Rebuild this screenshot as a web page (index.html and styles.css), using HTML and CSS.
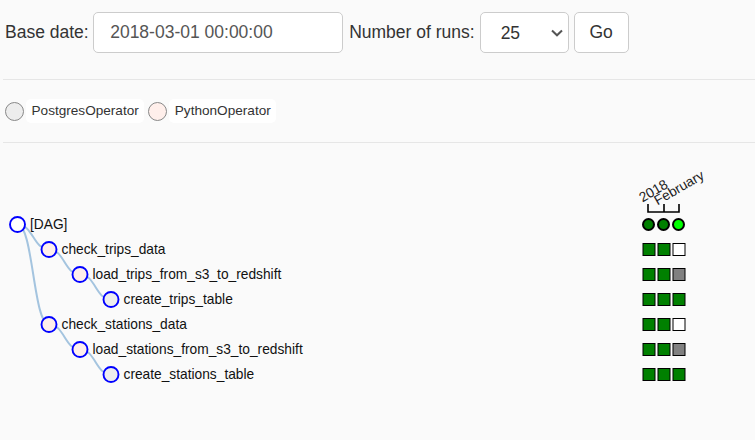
FILE: index.html
```html
<!DOCTYPE html>
<html lang="en">
<head>
<meta charset="utf-8">
<title>Tree view</title>
<link rel="stylesheet" href="styles.css">
</head>
<body>
<div class="page">
  <form class="toolbar">
    <label class="lbl base">Base date:</label>
    <input class="ctl date" type="text" value="2018-03-01 00:00:00">
    <label class="lbl runs">Number of runs:</label>
    <div class="select-wrap">
      <select class="ctl sel"><option>25</option></select>
      <svg class="chev" width="12" height="8" viewBox="0 0 12 8"><polyline points="1,1.5 6,6.3 11,1.5"/></svg>
    </div>
    <button class="ctl btn" type="button">Go</button>
  </form>
  <hr class="rule rule-top">
  <div class="legend">
    <span class="swatch postgres"></span><span class="tag">PostgresOperator</span>
    <span class="swatch python"></span><span class="tag">PythonOperator</span>
  </div>
  <hr class="rule rule-mid">
  <svg class="tree" width="755" height="297" viewBox="0 143 755 297">
    <g class="links">
      <path d="M17.5,224.5C33.25,224.5 33.25,249.5 49,249.5"/>
      <path d="M17.5,224.5C33.25,224.5 33.25,324.5 49,324.5"/>
      <path d="M49,249.5C64.5,249.5 64.5,274.5 80,274.5"/>
      <path d="M80,274.5C95.5,274.5 95.5,299.5 111,299.5"/>
      <path d="M49,324.5C64.5,324.5 64.5,349.5 80,349.5"/>
      <path d="M80,349.5C95.5,349.5 95.5,374.5 111,374.5"/>
    </g>
    <g class="nodes">
      <circle class="n-dag" cx="17.5" cy="224.5" r="7.5"/>
      <text x="30" y="224.5" dy="0.35em">[DAG]</text>
      <circle class="n-py" cx="49" cy="249.5" r="7.5"/>
      <text x="61.5" y="249.5" dy="0.35em">check_trips_data</text>
      <circle class="n-py" cx="80" cy="274.5" r="7.5"/>
      <text x="92.5" y="274.5" dy="0.35em">load_trips_from_s3_to_redshift</text>
      <circle class="n-pg" cx="111" cy="299.5" r="7.5"/>
      <text x="123.5" y="299.5" dy="0.35em">create_trips_table</text>
      <circle class="n-py" cx="49" cy="324.5" r="7.5"/>
      <text x="61.5" y="324.5" dy="0.35em">check_stations_data</text>
      <circle class="n-py" cx="80" cy="349.5" r="7.5"/>
      <text x="92.5" y="349.5" dy="0.35em">load_stations_from_s3_to_redshift</text>
      <circle class="n-pg" cx="111" cy="374.5" r="7.5"/>
      <text x="123.5" y="374.5" dy="0.35em">create_stations_table</text>
    </g>
    <g class="axis">
      <path d="M648,204V212H679V204M664,212V204"/>
      <text transform="translate(642.5,202.5) rotate(-30)">2018</text>
      <text transform="translate(657.5,205.5) rotate(-30)">February</text>
    </g>
    <g class="runs-row">
      <circle class="run ok" cx="648.5" cy="224.5" r="5.5"/>
      <circle class="run ok" cx="663.5" cy="224.5" r="5.5"/>
      <circle class="run live" cx="678.5" cy="224.5" r="5.5"/>
    </g>
    <g class="squares">
      <rect class="s-ok" x="643" y="243.5" width="12" height="12"/>
      <rect class="s-ok" x="658" y="243.5" width="12" height="12"/>
      <rect class="s-none" x="673" y="243.5" width="12" height="12"/>

      <rect class="s-ok" x="643" y="268.5" width="12" height="12"/>
      <rect class="s-ok" x="658" y="268.5" width="12" height="12"/>
      <rect class="s-gray" x="673" y="268.5" width="12" height="12"/>

      <rect class="s-ok" x="643" y="293.5" width="12" height="12"/>
      <rect class="s-ok" x="658" y="293.5" width="12" height="12"/>
      <rect class="s-ok" x="673" y="293.5" width="12" height="12"/>

      <rect class="s-ok" x="643" y="318.5" width="12" height="12"/>
      <rect class="s-ok" x="658" y="318.5" width="12" height="12"/>
      <rect class="s-none" x="673" y="318.5" width="12" height="12"/>

      <rect class="s-ok" x="643" y="343.5" width="12" height="12"/>
      <rect class="s-ok" x="658" y="343.5" width="12" height="12"/>
      <rect class="s-gray" x="673" y="343.5" width="12" height="12"/>

      <rect class="s-ok" x="643" y="368.5" width="12" height="12"/>
      <rect class="s-ok" x="658" y="368.5" width="12" height="12"/>
      <rect class="s-ok" x="673" y="368.5" width="12" height="12"/>
    </g>
  </svg>
</div>
</body>
</html>
```
FILE: styles.css
```css
html, body {
  margin: 0;
  padding: 0;
  background: #fafafa;
  overflow: hidden;
}
body {
  font-family: "Liberation Sans", Arial, sans-serif;
  color: #333;
}
.page {
  width: 755px;
  height: 440px;
}
.toolbar {
  display: flex;
  align-items: center;
  height: 41px;
  margin: 0;
  padding: 12px 0 0 5px;
}
.lbl {
  font-size: 17.5px;
  color: #333;
  white-space: nowrap;
}
.base {
  margin-right: 4.5px;
}
.runs {
  margin-left: 6px;
  margin-right: 5px;
}
.ctl {
  box-sizing: border-box;
  height: 41px;
  margin: 0;
  background: #fff;
  border: 1px solid #ccc;
  border-radius: 5px;
  font-family: "Liberation Sans", Arial, sans-serif;
  font-size: 17.5px;
  color: #555;
  outline: none;
}
.date {
  width: 250px;
  padding: 0 16px;
}
.select-wrap {
  position: relative;
  width: 89px;
  height: 41px;
}
.sel {
  width: 89px;
  padding: 0 0 0 20px;
  -webkit-appearance: none;
  appearance: none;
  color: #333;
}
.chev {
  position: absolute;
  left: 71px;
  top: 17px;
  pointer-events: none;
}
.chev polyline {
  fill: none;
  stroke: #555;
  stroke-width: 2;
}
.btn {
  width: 55px;
  margin-left: 5px;
  padding: 0;
  color: #333;
  cursor: pointer;
}
.rule {
  display: block;
  height: 0;
  border: 0;
  border-top: 1px solid #e6e6e6;
  margin: 0 0 0 3px;
}
.rule-top {
  margin-top: 26px;
}
.rule-mid {
  margin-top: 19px;
}
.legend {
  display: flex;
  align-items: center;
  padding: 19px 0 0 5px;
  height: 24px;
}
.swatch {
  box-sizing: border-box;
  width: 19px;
  height: 19px;
  border: 1px solid #888;
  border-radius: 50%;
}
.swatch.postgres {
  background: #ededed;
}
.swatch.python {
  background: #ffefeb;
  margin-left: 4px;
}
.tag {
  margin-left: 2px;
  padding: 0 5.5px;
  height: 24px;
  line-height: 24px;
  background: #fff;
  border-radius: 5px;
  font-size: 13.6px;
  color: #333;
}
.tree {
  display: block;
  font-family: "Liberation Sans", Arial, sans-serif;
}
.links path {
  fill: none;
  stroke: #a4c4df;
  stroke-width: 2;
}
.nodes circle {
  stroke: #0000ff;
  stroke-width: 1.9;
}
.nodes .n-dag { fill: #fff; }
.nodes .n-py { fill: #ffefeb; }
.nodes .n-pg { fill: #ededed; }
.nodes text {
  font-size: 13.75px;
  fill: #111;
}
.axis path {
  fill: none;
  stroke: #000;
  stroke-width: 1.6;
}
.axis text {
  font-size: 13.75px;
  fill: #222;
}
.run {
  stroke: #000;
  stroke-width: 2;
}
.run.ok { fill: #008000; }
.run.live { fill: #00ff00; }
.squares rect {
  stroke: #000;
  stroke-width: 1;
}
.squares .s-ok { fill: #008000; }
.squares .s-none { fill: #fff; }
.squares .s-gray { fill: #808080; }
```
